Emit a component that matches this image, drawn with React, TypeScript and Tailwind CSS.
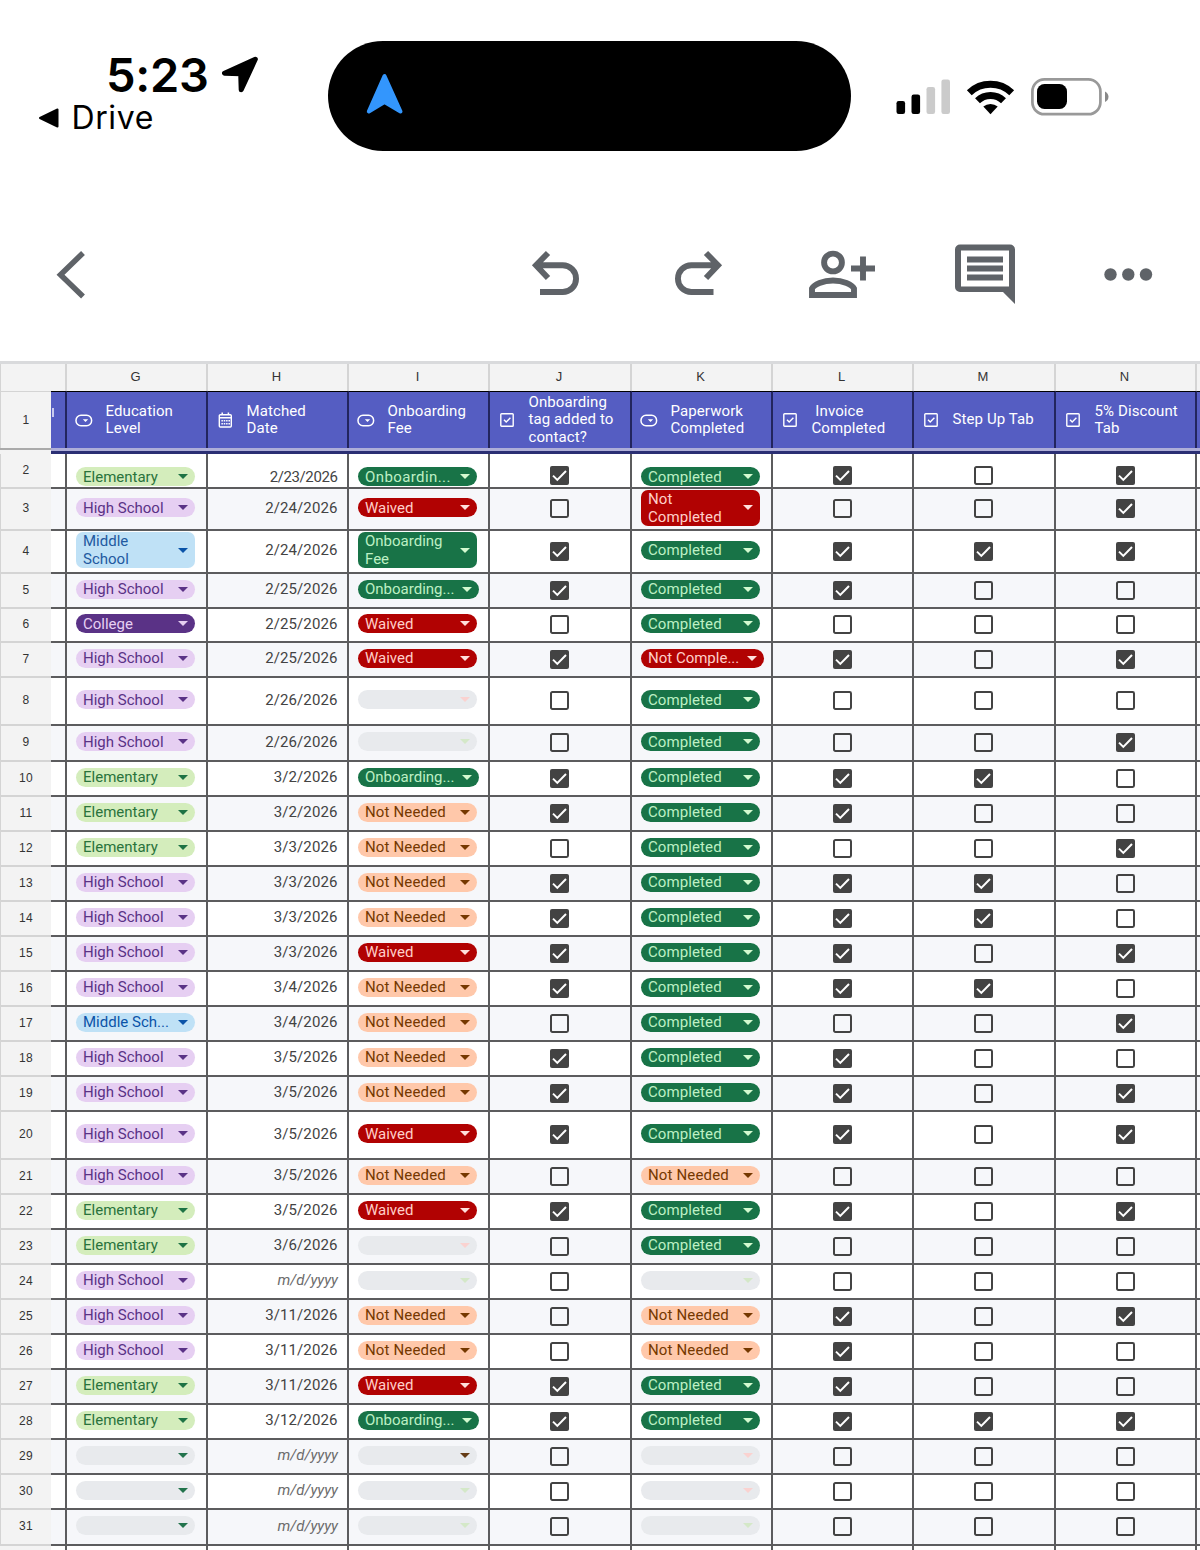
import React from "react";

type Chip = "E" | "H" | "M" | "Mw" | "C" | "O" | "O2" | "Ow" | "W" | "D" | "X" | "Xs" | "N" | "-r" | "-g" | "-G" | "-n";

interface ChipStyle {
  text: string;
  look: string;
  arrow: string;
  wide?: string;
}

const chips: Record<Chip, ChipStyle> = {
  E: { text: "Elementary", look: "bg-[#d4edbc] text-[#2a733c]", arrow: "text-[#1d7344]" },
  H: { text: "High School", look: "bg-[#e6cff2] text-[#5a3286]", arrow: "text-[#5a3286]" },
  M: { text: "Middle Sch...", look: "bg-[#bfe1f6] text-[#0a53a8]", arrow: "text-[#0a53a8]" },
  Mw: { text: "Middle\nSchool", look: "bg-[#bfe1f6] text-[#2259a0]", arrow: "text-[#0a53a8]" },
  C: { text: "College", look: "bg-[#5a3286] text-[#e6cff2]", arrow: "text-[#e6cff2]" },
  O: { text: "Onboardin...", look: "bg-[#187347] text-[#bdf0c4] tracking-[0.4px]", arrow: "text-[#d4fad0]" },
  O2: { text: "Onboarding...", look: "bg-[#187347] text-[#bdf0c4]", arrow: "text-[#d4fad0]", wide: "w-[121px]" },
  Ow: { text: "Onboarding\nFee", look: "bg-[#187347] text-[#bdf0c4]", arrow: "text-[#d4fad0]" },
  W: { text: "Waived", look: "bg-[#b10202] text-[#ffcfc9]", arrow: "text-[#ffe0dc]" },
  D: { text: "Completed", look: "bg-[#187347] text-[#bdf0c4] tracking-[0.1px]", arrow: "text-[#d4fad0]" },
  X: { text: "Not\nCompleted", look: "bg-[#b10202] text-[#ffcfc9] tracking-[0.1px]", arrow: "text-[#ffe0dc]" },
  Xs: { text: "Not Comple...", look: "bg-[#b10202] text-[#ffcfc9]", arrow: "text-[#ffe0dc]", wide: "w-[123px]" },
  N: { text: "Not Needed", look: "bg-[#ffc8aa] text-[#753800] tracking-[0.150px]", arrow: "text-[#753800]" },
  "-r": { text: "", look: "bg-[#e8eaed]", arrow: "text-[#fad2d0]" },
  "-g": { text: "", look: "bg-[#e8eaed]", arrow: "text-[#d4e8c8]" },
  "-G": { text: "", look: "bg-[#e8eaed]", arrow: "text-[#22734c]" },
  "-n": { text: "", look: "bg-[#e8eaed]", arrow: "text-[#653c16]" },
};

type Row = [height: number, g: Chip, date: string, i: Chip, j: 0 | 1, k: Chip, l: 0 | 1, m: 0 | 1, n: 0 | 1];

const rows: Row[] = [
  [35, "E", "2/23/2026", "O", 1, "D", 1, 0, 1],
  [42, "H", "2/24/2026", "W", 0, "X", 0, 0, 1],
  [43, "Mw", "2/24/2026", "Ow", 1, "D", 1, 1, 1],
  [35, "H", "2/25/2026", "O2", 1, "D", 1, 0, 0],
  [34, "C", "2/25/2026", "W", 0, "D", 0, 0, 0],
  [35, "H", "2/25/2026", "W", 1, "Xs", 1, 0, 1],
  [48, "H", "2/26/2026", "-r", 0, "D", 0, 0, 0],
  [36, "H", "2/26/2026", "-g", 0, "D", 0, 0, 1],
  [35, "E", "3/2/2026", "O2", 1, "D", 1, 1, 0],
  [35, "E", "3/2/2026", "N", 1, "D", 1, 0, 0],
  [35, "E", "3/3/2026", "N", 0, "D", 0, 0, 1],
  [35, "H", "3/3/2026", "N", 1, "D", 1, 1, 0],
  [35, "H", "3/3/2026", "N", 1, "D", 1, 1, 0],
  [35, "H", "3/3/2026", "W", 1, "D", 1, 0, 1],
  [35, "H", "3/4/2026", "N", 1, "D", 1, 1, 0],
  [35, "M", "3/4/2026", "N", 0, "D", 0, 0, 1],
  [35, "H", "3/5/2026", "N", 1, "D", 1, 0, 0],
  [35, "H", "3/5/2026", "N", 1, "D", 1, 0, 1],
  [48, "H", "3/5/2026", "W", 1, "D", 1, 0, 1],
  [35, "H", "3/5/2026", "N", 0, "N", 0, 0, 0],
  [35, "E", "3/5/2026", "W", 1, "D", 1, 0, 1],
  [35, "E", "3/6/2026", "-r", 0, "D", 0, 0, 0],
  [35, "H", "", "-g", 0, "-g", 0, 0, 0],
  [35, "H", "3/11/2026", "N", 0, "N", 1, 0, 1],
  [35, "H", "3/11/2026", "N", 0, "N", 1, 0, 0],
  [35, "E", "3/11/2026", "W", 1, "D", 1, 0, 0],
  [35, "E", "3/12/2026", "O2", 1, "D", 1, 1, 1],
  [35, "-G", "", "-n", 0, "-r", 0, 0, 0],
  [35, "-G", "", "-g", 0, "-r", 0, 0, 0],
  [36, "-G", "", "-g", 0, "-g", 0, 0, 0],
];

const columns = "grid grid-cols-[51px_16px_141px_141px_141px_142px_141px_141px_142px_141px_3px]";

function ChipView({ kind }: { kind: Chip }) {
  const c = chips[kind];
  const tall = c.text.includes("\n");
  return (
    <div
      className={`ml-[9px] flex shrink-0 items-center justify-between pl-[7px] pr-[7.500px] ${c.wide ?? "w-[119px]"} ${
        tall ? "h-9 rounded-[7px]" : "h-[19px] rounded-full"
      } ${c.look}`}
    >
      <span className="whitespace-pre text-[15px] leading-[18px]">{c.text}</span>
      <svg className={`h-[5px] w-[10px] shrink-0 ${c.arrow}`} viewBox="0 0 10 5" fill="currentColor">
        <path d="M0 0h10L5 5z" />
      </svg>
    </div>
  );
}

function Checkbox({ on }: { on: number }) {
  return (
    <svg className="ml-[60px] size-[19px]" viewBox="0 0 19 19" fill="none">
      {on ? (
        <>
          <rect width="19" height="19" rx="2" fill="#434343" />
          <path d="M3 9.6l4.3 4.3L16 5" stroke="#fff" strokeWidth="2" />
        </>
      ) : (
        <rect x="1" y="1" width="17" height="17" rx="1.4" stroke="#434343" strokeWidth="2" />
      )}
    </svg>
  );
}

function Cell({ children, first, box }: { children?: React.ReactNode; first?: boolean; box?: boolean }) {
  const pad = first ? (box ? "pt-[10px]" : "pt-[12px]") : box ? "pb-px" : "pb-[3px]";
  return <div className={`flex items-center overflow-hidden border-r-2 border-b-2 border-[#5c5c5e] ${pad}`}>{children}</div>;
}

function PillIcon() {
  return (
    <svg className="h-[13px] w-[18px]" viewBox="0 0 18 13" fill="none">
      <rect x="1" y="1.2" width="15.6" height="10.6" rx="5" stroke="#fff" strokeWidth="1.5" />
      <path d="M7.8 5.2h5.4l-2.7 2.9z" fill="#fff" />
    </svg>
  );
}

function CalendarIcon() {
  return (
    <svg className="h-4 w-[15px]" viewBox="0 0 15 16" fill="none" stroke="#fff">
      <rect x="1.3" y="2.7" width="12" height="12.3" rx="1" strokeWidth="1.4" />
      <path d="M1.3 5.8h12M4.2 0.5v2.5M10.4 0.5v2.5" strokeWidth="1.5" />
      <path d="M3.4 8.7h8.6M3.4 11.7h8.6" strokeWidth="1.5" strokeDasharray="1.5 0.85" />
    </svg>
  );
}

function CheckIcon() {
  return (
    <svg className="size-[14px]" viewBox="0 0 14 14" fill="none" stroke="#fff">
      <rect x="0.8" y="0.8" width="12.4" height="12.4" rx="0.8" strokeWidth="1.4" />
      <path d="M4 6.8l2.2 2.2L10.4 4.8" strokeWidth="1.4" />
    </svg>
  );
}

const headers: { letter: string; icon: "pill" | "cal" | "check"; text: string }[] = [
  { letter: "G", icon: "pill", text: "Education\nLevel" },
  { letter: "H", icon: "cal", text: "Matched\nDate" },
  { letter: "I", icon: "pill", text: "Onboarding\nFee" },
  { letter: "J", icon: "check", text: "Onboarding\ntag added to\ncontact?" },
  { letter: "K", icon: "pill", text: "Paperwork\nCompleted" },
  { letter: "L", icon: "check", text: "\u00a0Invoice\nCompleted" },
  { letter: "M", icon: "check", text: "Step Up Tab" },
  { letter: "N", icon: "check", text: "5% Discount\nTab" },
];

function StatusBar() {
  return (
    <header className="flex h-[200px] items-start">
      <div className="w-[328px] shrink-0 pt-[51px]">
        <div className="flex items-start pl-[106px]">
          <span className="w-[115px] text-[47px] leading-[48px] font-[570] tracking-[-0.3px]">5:23</span>
          <svg className="mt-1 h-[40px] w-[40px]" viewBox="0 0 40 40">
            <path d="M34.300 4.200L3.500 18.300l16.200.4.500 16.100z" strokeWidth="5" strokeLinejoin="round" stroke="#000" />
          </svg>
        </div>
        <div className="flex items-center pl-[38px]">
          <svg className="h-[22px] w-[22px]" viewBox="0 0 22 22">
            <path d="M2 11L19.5 2.5v17z" stroke="#000" strokeWidth="2" strokeLinejoin="round" />
          </svg>
          <span className="ml-[11.500px] text-[32px] leading-[38px] font-[440] tracking-[0.6px]">Drive</span>
        </div>
      </div>
      <div className="mt-[41px] flex h-[110px] w-[523px] shrink-0 items-center rounded-full bg-black pl-[36px]">
        <svg className="-mt-[4px] h-[44px] w-[40px]" viewBox="0 0 40 44">
          <path d="M20.5 4L4.800 39.500l15.700-9.500 16 9.500z" fill="#3396fd" stroke="#3396fd" strokeWidth="4" strokeLinejoin="round" />
        </svg>
      </div>
      <div className="mt-[78px] flex h-[38px] items-start pl-[45px]">
        <svg className="h-[38px] w-[56px]" viewBox="0 0 56 38">
          <rect x="0.500" y="23" width="8.600" height="13" rx="2.200" />
          <rect x="15.500" y="16.500" width="8.600" height="19.500" rx="2.200" />
          <rect x="30.500" y="9" width="8.600" height="27" rx="2.200" fill="#cbcbcb" />
          <rect x="45.400" y="1.500" width="8.600" height="34.500" rx="2.200" fill="#cbcbcb" />
        </svg>
        <svg className="ml-[14px] h-[38px] w-[50px]" viewBox="0 0 50 38" fill="none" stroke="#000">
          <path d="M3.300 14.700A30.800 30.800 0 0 1 45.700 14.700" strokeWidth="7" />
          <path d="M11.500 22.800A18.600 18.600 0 0 1 37.500 22.800" strokeWidth="7" />
          <path d="M24.500 36.200L17.300 28.600A11 11 0 0 1 31.700 28.600Z" fill="#000" stroke="none" />
        </svg>
        <svg className="ml-[14px] h-[38px] w-[80px]" viewBox="0 0 80 38">
          <rect x="2.400" y="1.400" width="68" height="34.800" rx="12" fill="none" stroke="#999" strokeWidth="2.700" />
          <rect x="7" y="6" width="30" height="25" rx="7.500" />
          <path d="M75 13.500c2.200 1 3.500 3 3.500 5.300s-1.300 4.300-3.500 5.300z" fill="#888" />
        </svg>
      </div>
    </header>
  );
}

function Toolbar() {
  return (
    <nav className="flex h-[161px] items-start pt-[40px] pl-[50px] text-[#5f6368]">
      <svg className="h-[70px] w-[50px]" viewBox="50 240 50 70" fill="none" stroke="currentColor" strokeWidth="5.500">
        <path d="M83 253L60.500 274.700 83 296.500" />
      </svg>
      <svg className="ml-[425px] h-[70px] w-[60px]" viewBox="525 240 60 70" fill="none" stroke="currentColor" strokeWidth="5.900">
        <path d="M548 253L536 265.300 548 278M536 265.300H562.700A13.350 13.350 0 0 1 562.700 292H540" />
      </svg>
      <svg className="ml-[84px] h-[70px] w-[60px]" viewBox="669 240 60 70" fill="none" stroke="currentColor" strokeWidth="5.900">
        <path d="M706 253L718 265.300 706 278M718 265.300H691.300A13.350 13.350 0 0 0 691.300 292H713.500" />
      </svg>
      <svg className="ml-[71px] h-[70px] w-[80px]" viewBox="800 240 80 70" fill="none" stroke="currentColor" strokeWidth="5.900">
        <circle cx="833" cy="262.500" r="8.900" />
        <path d="M812 295V288.500C814 284.500 823 280.500 833 280.500S852 284.500 854 288.500V295ZM851 268.500H875M863 256.500V280.500" />
      </svg>
      <svg className="ml-[70px] h-[70px] w-[70px]" viewBox="950 240 70 70" fill="currentColor">
        <path
          fillRule="evenodd"
          d="M960 244.500H1010a5 5 0 0 1 5 5V304L1003 292H960a5 5 0 0 1-5-5V249.500a5 5 0 0 1 5-5ZM961 250.500V286.500H1009V250.500ZM967 256.500h36v6h-36ZM967 265.500h36v6h-36ZM967 274.500h36v6h-36Z"
        />
      </svg>
      <svg className="ml-[80px] h-[70px] w-[60px]" viewBox="1100 240 60 70" fill="currentColor">
        <circle cx="1110.500" cy="274.500" r="6.200" />
        <circle cx="1128.300" cy="274.500" r="6.200" />
        <circle cx="1146" cy="274.500" r="6.200" />
      </svg>
    </nav>
  );
}

export default function App() {
  return (
    <div className="h-[1550px] w-[1200px] overflow-hidden bg-white font-['Inter',sans-serif] text-black">
      <StatusBar />
      <Toolbar />
      <main className="border-t-[3px] border-[#d9dadc] font-['Roboto',sans-serif]">
        <div className={`${columns} h-[27px] bg-[#f3f3f3] font-['Liberation_Sans',sans-serif] text-[13px] text-[#333]`}>
          <div className="border-l border-[#d4d4d4]" />
          <div className="border-r-2 border-[#d4d4d4]" />
          {headers.map((h) => (
            <div key={h.letter} className="flex items-center justify-center border-r-2 border-[#d4d4d4] pr-[2px] pb-[2px]">
              {h.letter}
            </div>
          ))}
          <div />
        </div>
        <div className={`${columns} h-[57px] bg-[#555dc2] text-white`}>
          <div className="flex items-center justify-center border-t border-l border-[#d4d4d4] bg-[#f3f3f3] font-['Liberation_Sans',sans-serif] text-[12px] tracking-[0.3px] text-[#333]">
            1
          </div>
          <div className="overflow-hidden border-t border-r-2 border-t-black border-r-[#22255e] pt-[16px]">
            <div className="ml-[1px] h-[9px] w-[1.5px] bg-[#c9cbee]" />
          </div>
          {headers.map((h) => (
            <div
              key={h.letter}
              className="flex items-center overflow-hidden border-t border-r-2 border-t-black border-r-[#22255e]"
            >
              <div className={`flex w-[38.500px] shrink-0 ${h.icon === "pill" ? "pl-[8px]" : "pl-[10px]"}`}>
                {h.icon === "pill" ? <PillIcon /> : h.icon === "cal" ? <CalendarIcon /> : <CheckIcon />}
              </div>
              <div className="text-[15px] leading-[17.500px] tracking-[0.100px] whitespace-pre">{h.text}</div>
            </div>
          ))}
          <div className="border-t border-black" />
        </div>
        <div className="grid h-[6px] grid-cols-[51px_1149px]">
          <div className="border-t-2 border-[#aaa] bg-[#f3f3f3]" />
          <div className="border-t-[3px] border-b-[3px] border-t-[#aeaed8] border-b-[#2b2f74]" />
        </div>
        {rows.map(([height, g, date, i, j, k, l, m, n], index) => {
          const first = index === 0;
          return (
            <div key={index} className={`${columns} ${index % 2 ? "bg-[#f6f7fa]" : "bg-white"}`} style={{ height }}>
              <div className="flex items-center justify-center border-b-2 border-l border-[#d4d4d4] bg-[#f3f3f3] pb-[2px] font-['Liberation_Sans',sans-serif] text-[12px] tracking-[0.3px] text-[#333]">
                {index + 2}
              </div>
              <Cell />
              <Cell first={first}>
                <ChipView kind={g} />
              </Cell>
              <Cell first={first}>
                <span
                  className={`ml-auto text-[15px] leading-[18px] ${
                    date ? "pr-[9.500px] text-[#434343]" : "pr-[9px] text-[#6b6b6b] italic"
                  } ${first ? "tracking-[-0.400px]" : date ? "tracking-[0.100px]" : ""}`}
                >
                  {date || "m/d/yyyy"}
                </span>
              </Cell>
              <Cell first={first}>
                <ChipView kind={i} />
              </Cell>
              <Cell first={first} box>
                <Checkbox on={j} />
              </Cell>
              <Cell first={first}>
                <ChipView kind={k} />
              </Cell>
              {[l, m, n].map((on, c) => (
                <Cell key={c} first={first} box>
                  <Checkbox on={on} />
                </Cell>
              ))}
              <div className="border-b-2 border-[#5c5c5e]" />
            </div>
          );
        })}
        <div className={`${columns} h-[4px] bg-white`}>
          <div className="bg-[#f3f3f3]" />
          {Array.from({ length: 9 }, (_, c) => (
            <div key={c} className="border-r-2 border-[#5c5c5e]" />
          ))}
        </div>
      </main>
    </div>
  );
}
